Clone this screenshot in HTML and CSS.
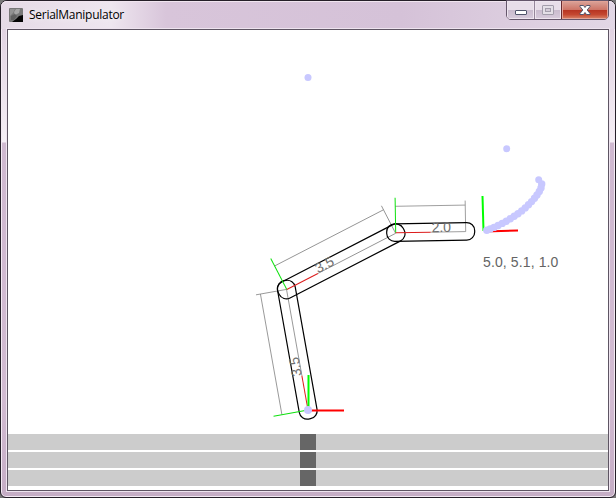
FILE: index.html
```
<!DOCTYPE html>
<html lang="en">
<head>
<meta charset="utf-8">
<title>SerialManipulator</title>
<link rel="stylesheet" href="styles.css">
</head>
<body>
<div class="window">
  <header class="titlebar">
    <svg class="app-icon" width="14" height="14" viewBox="0 0 14 14">
      <rect width="14" height="14" rx="1" fill="#777"/>
      <path d="M1 1h5l-2 4-3 3z" fill="#929292"/>
      <path d="M7 1h4l-1 4-4 2-1-3z" fill="#a5a5a5"/>
      <path d="M2 8l4-2 2 2-3 4H2z" fill="#606060"/>
      <path d="M14 7v7H3l4-3 3-3z" fill="#050505"/>
    </svg>
    <h1 class="title">SerialManipulator</h1>
    <div class="controls">
      <button class="control minimize" aria-label="Minimize">
        <svg width="14" height="14" viewBox="0 0 14 14"><rect x="1.5" y="6.5" width="11" height="4" rx=".5" fill="#fff" stroke="#50546b"/></svg>
      </button>
      <button class="control maximize" aria-label="Maximize">
        <svg width="14" height="14" viewBox="0 0 14 14"><rect x="1.5" y="1.5" width="11" height="9" rx=".5" fill="#e4dfe7" stroke="#a39dab"/><rect x="4.5" y="4.5" width="5" height="3" fill="#d4cbd8" stroke="#a39dab"/></svg>
      </button>
      <button class="control close" aria-label="Close">
        <svg width="14" height="14" viewBox="0 0 14 14"><path d="M2 1.500h3.500L7 3.500l1.500-2H12v1L9.200 6l2.800 3.500v1H8.500L7 8.500l-1.500 2H2v-1L4.800 6 2 2.500z" fill="#fff" stroke="#53556a"/></svg>
      </button>
    </div>
  </header>
  <main class="content">
    <svg class="scene" width="600" height="404" viewBox="8 30 600 404">
      <defs>
        <g id="frame" fill="none">
          <path d="M0 0V-35" stroke="#0de10d"/>
          <path d="M0 0H35" stroke="#dc1c1c"/>
        </g>
        <g id="long-link" fill="none" stroke="#888">
          <path d="M35 0H122.500M0-26.500H122.500M122.500 0V-31" stroke-width=".8"/>
          <rect x="-9" y="-9" width="140.500" height="18" rx="8" stroke="#000" stroke-width="1.200"/>
          <use href="#frame"/>
        </g>
      </defs>
      <g transform="translate(308 410) rotate(-100.100)">
        <use href="#long-link"/>
        <text class="length" x="35" y="0">3.5</text>
      </g>
      <g transform="translate(286.800 289.500) rotate(-27.300)">
        <use href="#long-link"/>
        <text class="length" x="35" y="0">3.5</text>
      </g>
      <g transform="translate(395.700 232.800) rotate(-1)">
        <path d="M35 0H70M0-26.500H70M70 0V-31" stroke="#888" stroke-width=".8"/>
        <rect x="-9" y="-9" width="88" height="17.500" rx="8" fill="none" stroke="#000" stroke-width="1.200"/>
        <use href="#frame"/>
        <text class="length" x="36" y="0">2.0</text>
      </g>
      <g fill="none" stroke-width="2">
        <path d="M308.500 410V375" stroke="#0f0"/>
        <path d="M308 410.500H344" stroke="#f00"/>
        <path d="M483.500 231L482.500 196" stroke="#0f0"/>
        <path d="M484 231.500L518 230.400" stroke="#f00"/>
      </g>
      <g class="trace">
        <circle cx="308" cy="77.500" r="3.500"/>
        <circle cx="308" cy="410" r="4"/>
        <circle cx="506.700" cy="148.700" r="3.500"/>
        <circle cx="538.700" cy="179.800" r="3.500"/>
        <circle cx="541.700" cy="184" r="3.700"/>
        <circle cx="541" cy="188" r="3.700"/>
        <circle cx="539.300" cy="191.500" r="3.700"/>
        <circle cx="537" cy="195" r="3.700"/>
        <circle cx="534.500" cy="198.300" r="3.700"/>
        <circle cx="531.600" cy="201.600" r="3.700"/>
        <circle cx="528.500" cy="204.800" r="3.700"/>
        <circle cx="525.200" cy="207.900" r="3.700"/>
        <circle cx="521.700" cy="210.900" r="3.700"/>
        <circle cx="518" cy="213.700" r="3.700"/>
        <circle cx="514.200" cy="216.300" r="3.700"/>
        <circle cx="510.300" cy="218.800" r="3.700"/>
        <circle cx="506.300" cy="221.200" r="3.700"/>
        <circle cx="502.200" cy="223.400" r="3.700"/>
        <circle cx="498.100" cy="225.500" r="3.700"/>
        <circle cx="494" cy="227.400" r="3.700"/>
        <circle cx="490.200" cy="229" r="3.700"/>
        <circle cx="486.800" cy="230.200" r="3.700"/>
      </g>
      <text class="position" x="483" y="267">5.0, 5.1, 1.0</text>
    </svg>
    <div class="sliders">
      <div class="slider"><span class="handle"></span></div>
      <div class="slider"><span class="handle"></span></div>
      <div class="slider"><span class="handle"></span></div>
    </div>
  </main>
</div>
</body>
</html>
```
FILE: styles.css
```
* { box-sizing: border-box; }

body {
  margin: 0;
  background: #777;
  overflow: hidden;
}

.window {
  width: 616px;
  height: 498px;
  padding: 0 6px 5px;
  border: 1px solid #251f28;
  border-radius: 7px 7px 6px 6px;
  box-shadow: inset 0 0 0 1px #f3eaf3;
  background: linear-gradient(#dccbdc 0, #e1d3e2 30px, #f5eff5 141px, #cfb9d0 142px, #d2bbd2 400px, #c5adc5 100%);
}

.titlebar {
  display: flex;
  align-items: flex-start;
  height: 28px;
  margin: 0 -6px;
  padding-left: 8px;
  border-radius: 6px 6px 0 0;
  background: linear-gradient(90deg, #e5dae6, #eee6ef 110px, #d8c5da 165px, #d5c2d8 400px, #e2d7e5);
  box-shadow: inset 0 1px #f0e5ef;
}

.app-icon { margin-top: 7px; }

.title {
  margin: 5px 0 0 6px;
  font: 12px/18px "Open Sans", "Noto Sans", sans-serif;
  letter-spacing: -0.27px;
  color: #000;
  text-shadow: 0 0 7px #fff;
}

.controls {
  display: flex;
  width: 103px;
  height: 20px;
  margin: -1px 6px 0 auto;
  border: 1px solid #65566b;
  border-radius: 0 0 5px 5px;
  overflow: hidden;
}

.control {
  display: flex;
  align-items: center;
  justify-content: center;
  width: 28px;
  padding: 2px 0 0;
  border: 0;
  border-right: 1px solid #95869a;
  background: linear-gradient(#e8dee9 0 49%, #c9bbce 50%, #d8cbdc);
  box-shadow: inset 0 0 0 1px #eee5ef;
}

.maximize { width: 27px; border-color: #672b30; }

.close {
  flex: 1;
  border: 0;
  background: linear-gradient(#dba49a, #cd7466 49%, #b63321 50%, #c44730 75%, #da866a);
  box-shadow: inset 0 0 0 1px #e2a397;
}

.content {
  width: 602px;
  height: 462px;
  border: 1px solid #5e5563;
  background: #fff;
  box-shadow: 0 0 0 1px #eee4ef;
}

.scene { display: block; }

.length, .position {
  font-family: "Liberation Sans", Arial, sans-serif;
  font-size: 14px;
  fill: #646464;
}

.length { fill: #707070; }

.position { letter-spacing: 0.12px; }

.trace { fill: #c8c8ff; }

.sliders {
  display: grid;
  gap: 2px;
}

.slider {
  display: flex;
  height: 16px;
  padding-left: 292px;
  background: #ccc;
}

.handle {
  width: 16px;
  background: #666;
}
```
